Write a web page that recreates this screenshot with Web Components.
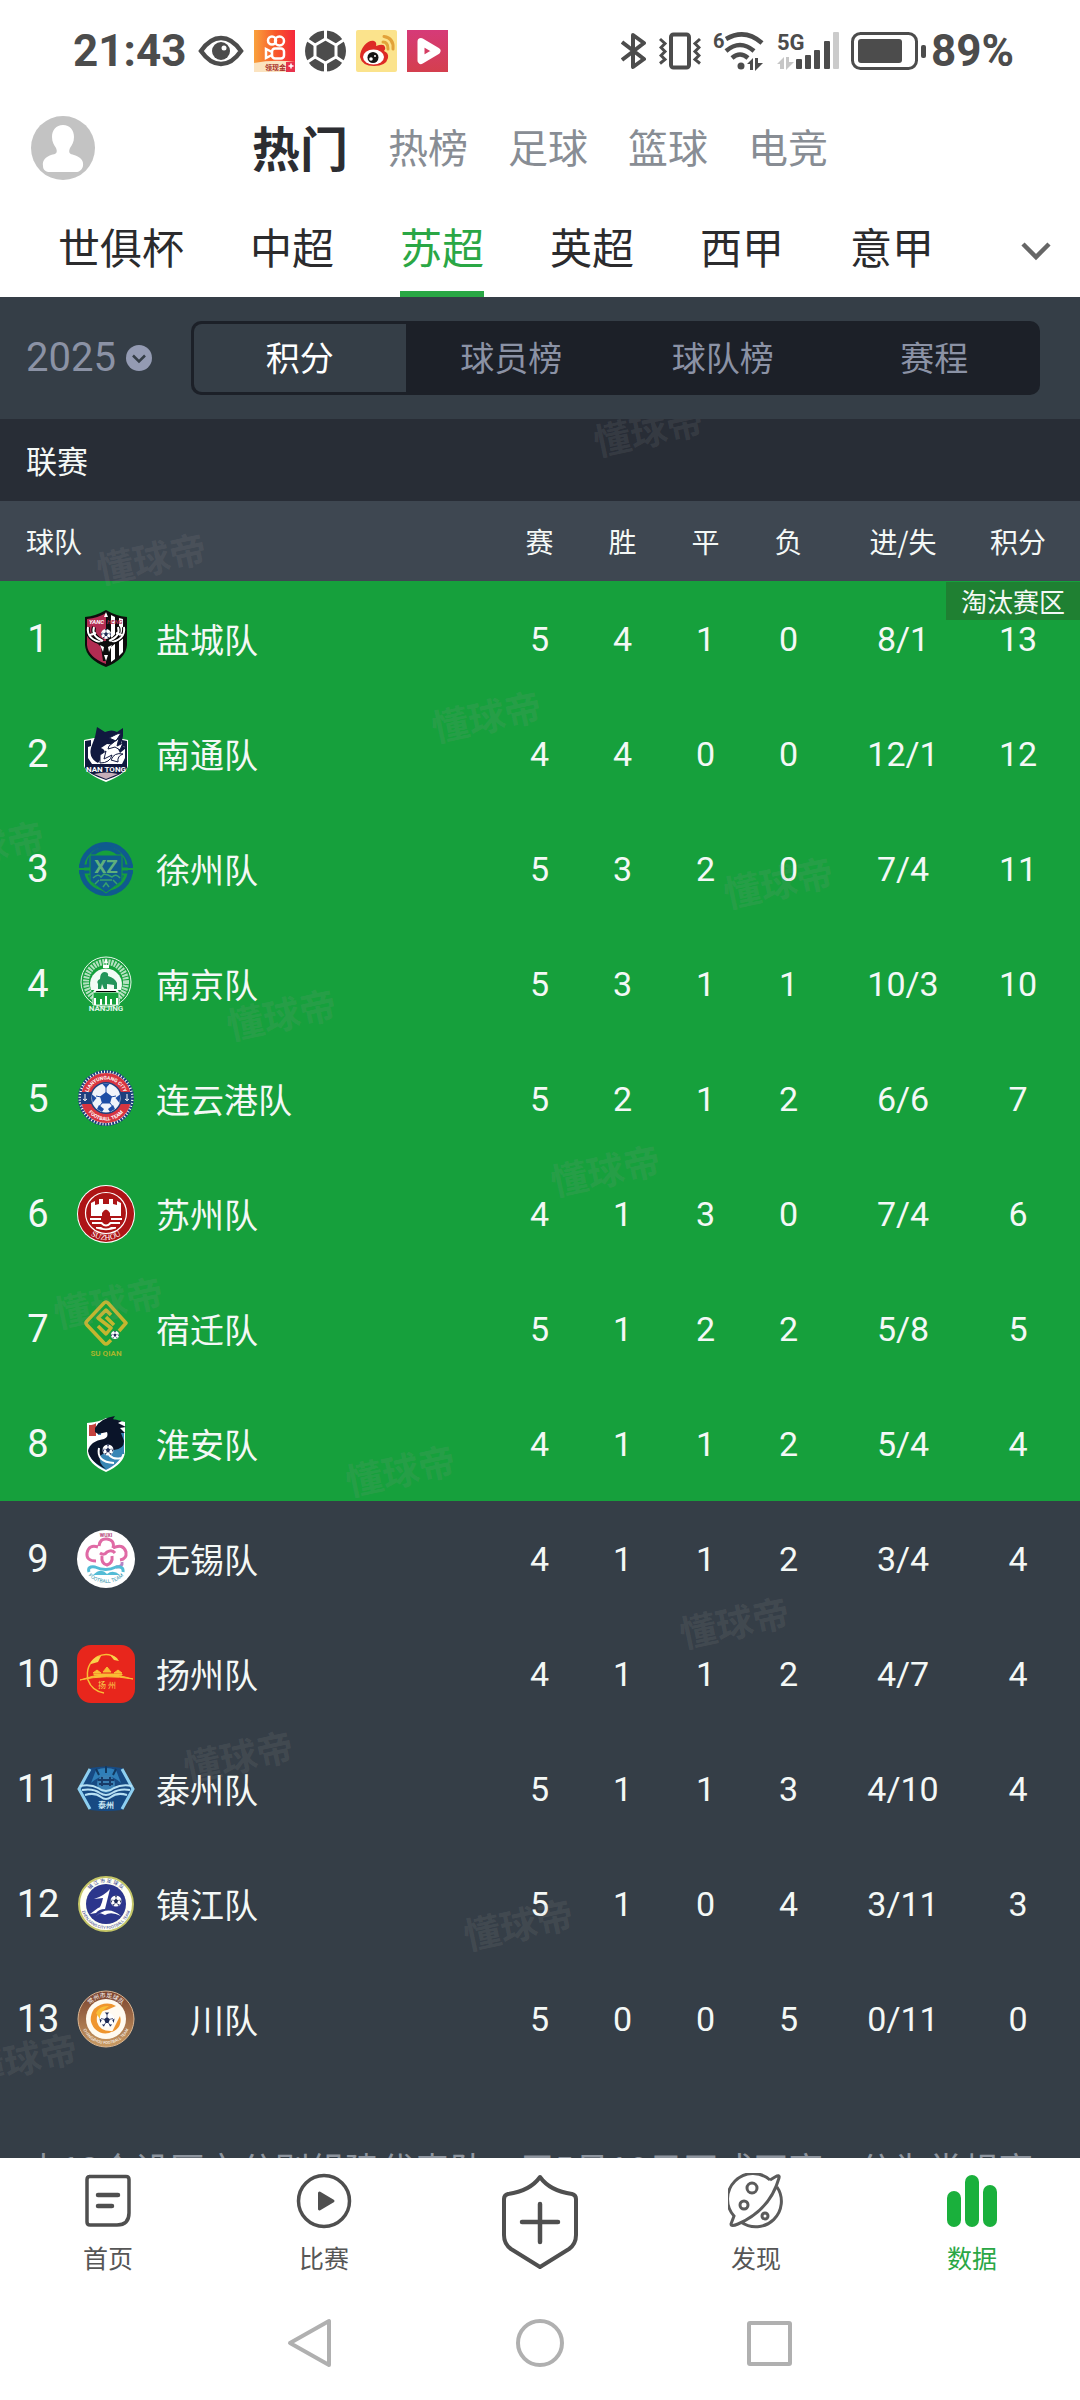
<!DOCTYPE html>
<html lang="zh-CN">
<head>
<meta charset="UTF-8">
<meta name="viewport" content="width=device-width, initial-scale=1">
<title>苏超积分榜</title>
<style>
  html, body {
    height: 100%;
    margin: 0;
  }
  body {
    font-family: "Noto Sans CJK SC", "Noto Sans", sans-serif;
    background: #fff;
    --num: Roboto, "Noto Sans CJK SC", sans-serif;
    --green: #2aa745;
    --dark: #353e47;
    --muted: #8b92a5;
  }
</style>
</head>
<body>
<app-shell>
  <status-bar slot="top"></status-bar>
  <channel-bar slot="top">
    <channel-link active>热门</channel-link>
    <channel-link>热榜</channel-link>
    <channel-link>足球</channel-link>
    <channel-link>篮球</channel-link>
    <channel-link>电竞</channel-link>
  </channel-bar>
  <league-bar slot="top">
    <league-link>世俱杯</league-link>
    <league-link>中超</league-link>
    <league-link active>苏超</league-link>
    <league-link>英超</league-link>
    <league-link>西甲</league-link>
    <league-link>意甲</league-link>
  </league-bar>

  <filter-bar>
    <filter-option active>积分</filter-option>
    <filter-option>球员榜</filter-option>
    <filter-option>球队榜</filter-option>
    <filter-option>赛程</filter-option>
  </filter-bar>
  <standings-table>联赛</standings-table>
  <league-intro>由13个设区市分别组建代表队，于5月10日正式开赛，分为常规赛</league-intro>

  <tab-bar slot="bottom">
    <tab-item icon="home">首页</tab-item>
    <tab-item icon="match">比赛</tab-item>
    <tab-item icon="post"></tab-item>
    <tab-item icon="discover">发现</tab-item>
    <tab-item icon="data" active>数据</tab-item>
  </tab-bar>
  <system-nav slot="bottom"></system-nav>
</app-shell>

<script>
class AppShell extends HTMLElement {
  connectedCallback() {
    this.attachShadow({ mode: 'open' });
    this.shadowRoot.innerHTML = `
      <style>
        :host {
          display: flex;
          flex-direction: column;
          height: 100vh;
        }
        main {
          flex: 1;
          min-height: 0;
          overflow-y: auto;
          scrollbar-width: none;
          background: var(--dark);
        }
      </style>
      <header><slot name="top"></slot></header>
      <main><slot></slot></main>
      <footer><slot name="bottom"></slot></footer>
    `;
  }
}

class StatusBar extends HTMLElement {
  connectedCallback() {
    this.attachShadow({ mode: 'open' });
    this.shadowRoot.innerHTML = `
      <style>
        :host {
          display: flex;
          justify-content: space-between;
          align-items: center;
          height: 102px;
          padding: 0 66px 0 73px;
          color: #4c4c4c;
          font: 700 44px/48px var(--num);
        }
        div {
          display: flex;
          align-items: center;
          gap: 12px;
        }
        .apps {
          gap: 10px;
        }
        .battery {
          gap: 4px;
        }
        svg {
          display: block;
          font-family: Roboto, sans-serif;
          font-weight: 700;
        }
      </style>
      <div>
        <span>21:43</span>
        <div class="apps">
          <svg width="46" height="42" viewBox="0 0 46 42"><path d="M3 21Q12 8 23 8T43 21Q34 34 23 34T3 21Z" fill="none" stroke="#4c4c4c" stroke-width="4.500"/><circle cx="23" cy="21" r="9" fill="#4c4c4c"/><circle cx="26" cy="18" r="2.500" fill="#fff"/></svg>
          <svg width="41" height="42" viewBox="0 0 41 42">
            <defs><linearGradient id="ks" x1="0" x2="1"><stop offset="0" stop-color="#f9a13c"/><stop offset=".55" stop-color="#f8562a"/><stop offset="1" stop-color="#f5283c"/></linearGradient></defs>
            <rect width="41" height="42" fill="url(#ks)"/>
            <g fill="none" stroke="#fff" stroke-width="2.500"><circle cx="18" cy="10.500" r="4"/><circle cx="25.500" cy="11" r="4.500"/><rect x="18" y="18.500" width="12" height="10" rx="3"/><path d="M18 22l-6-3v9l6-3"/></g>
            <path d="M0 33Q20 29 41 32V42H0Z" fill="#fbe3c0"/><rect x="32" y="32" width="9" height="10" fill="#e8324c"/><path d="M37 33.500v5M34.500 36h5" stroke="#fff" stroke-width="1.500"/>
            <text x="11" y="40" font-size="7" fill="#a8302a" font-family="Noto Sans CJK SC">领现金</text>
          </svg>
          <svg width="41" height="42" viewBox="0 0 41 42"><circle cx="20.500" cy="21" r="20.500" fill="#4c4c4c"/><g stroke="#fff" stroke-width="3" fill="none"><path d="M20.500 9L31 15v12L20.500 33L10 27V15Z"/><path d="M20.500 0v9M20.500 33v9M31 15l7.500-5M31 27l7.500 5M10 15L2.500 10M10 27l-7.500 5"/></g></svg>
          <svg width="41" height="42" viewBox="0 0 41 42"><rect width="41" height="42" rx="2" fill="#fbe38c"/><path d="M4 27C4 17 13 9 18 11Q21 12 20 16Q28 13 29 17Q30 19 28 21Q33 23 32 28Q30 36 18 36T4 27Z" fill="#dd2a25"/><ellipse cx="17.500" cy="27" rx="10.500" ry="7.500" fill="#fff"/><circle cx="17" cy="27.500" r="5.500" fill="#151515"/><circle cx="15" cy="29" r="1.800" fill="#fff"/><circle cx="19" cy="26" r="1" fill="#fff"/><path d="M27 12Q32 12 32 19M28 6.500Q38 8 37 19" stroke="#e2a23a" stroke-width="3" fill="none" stroke-linecap="round"/></svg>
          <svg width="41" height="42" viewBox="0 0 41 42">
            <defs><linearGradient id="vd" x1="0" x2="0" y1="0" y2="1"><stop offset="0" stop-color="#d63a78"/><stop offset="1" stop-color="#d43f4e"/></linearGradient></defs>
            <rect width="41" height="42" fill="url(#vd)"/><path d="M14 11.500L30 21L14 30.500Z" fill="none" stroke="#fff" stroke-width="7" stroke-linejoin="round"/>
          </svg>
        </div>
      </div>
      <div>
        <svg width="26" height="40" viewBox="0 0 26 40"><path d="M1 11L23 28L12 36V4L23 12L1 29" fill="none" stroke="#4c4c4c" stroke-width="4" stroke-linejoin="round"/></svg>
        <svg width="42" height="40" viewBox="0 0 42 40"><g fill="none" stroke="#4c4c4c"><rect x="12" y="3.500" width="18" height="33" rx="2.500" stroke-width="4"/><path d="M1 8l5 4.500-4 4 4 4-4 4 4 4-5 4M41 8l-5 4.500 4 4-4 4 4 4-4 4 5 4" stroke-width="3"/></g></svg>
        <svg width="52" height="42" viewBox="0 0 52 42"><text x="0" y="18" font-size="20" fill="#4c4c4c">6</text><g fill="none" stroke="#4c4c4c" stroke-width="4.500"><path d="M13 9Q32-2 49 13"/><path d="M13 21Q27 9 41 21"/><path d="M19 28Q27 21 35 28"/></g><circle cx="28" cy="36" r="3.500" fill="#4c4c4c"/><path d="M34 34l6-6v12h-3v-6ZM42 28h3v5h5l-8 8Z" fill="#4c4c4c"/></svg>
        <svg width="62" height="42" viewBox="0 0 62 42"><text x="0" y="20" font-size="22" fill="#4c4c4c">5G</text><path d="M0 34l7-7v12h-4v-5ZM9 27h3v5h5l-8 8Z" fill="#c6c6c6"/><g fill="#4c4c4c"><rect x="19" y="29" width="6" height="10" rx="1"/><rect x="28" y="25" width="6" height="14" rx="1"/><rect x="37" y="20" width="6" height="19" rx="1"/><rect x="47" y="11" width="6" height="28" rx="1"/></g><rect x="56" y="2" width="6" height="37" rx="1" fill="#cbcbcb"/></svg>
        <div class="battery">
          <svg width="76" height="40" viewBox="0 0 76 40"><rect x="1.500" y="2.500" width="64" height="35" rx="8" fill="none" stroke="#4c4c4c" stroke-width="3"/><rect x="7" y="8" width="44" height="24" rx="3" fill="#4c4c4c"/><rect x="70" y="14" width="5" height="13" rx="2" fill="#4c4c4c"/></svg>
          <span>89%</span>
        </div>
      </div>
    `;
  }
}

class ChannelBar extends HTMLElement {
  connectedCallback() {
    this.attachShadow({ mode: 'open' });
    this.shadowRoot.innerHTML = `
      <style>
        :host {
          display: grid;
          grid-template-columns: 64px 1fr 64px;
          align-items: center;
          height: 92px;
          padding: 0 31px;
        }
        nav {
          display: flex;
          justify-content: center;
          align-items: center;
          gap: 40px;
          padding-bottom: 4px;
        }
        button {
          padding: 0;
          border: 0;
          background: none;
        }
        svg {
          display: block;
        }
      </style>
      <button aria-label="我的">
        <svg width="64" height="64" viewBox="0 0 64 64"><circle cx="32" cy="32" r="32" fill="#c3c3c3"/><path d="M32 9c7 0 11 5 11 12 0 5-2 8-4 11-2 5 0 6 4 7 6 2 10 5 9 11-1 4-4 6-7 6H19c-4 0-7-2-7-6-1-6 3-9 8-11 5-1 7-2 5-7-2-3-4-6-4-11 0-7 4-12 11-12Z" fill="#fff"/></svg>
      </button>
      <nav><slot></slot></nav>
    `;
  }
}

class ChannelLink extends HTMLElement {
  connectedCallback() {
    this.attachShadow({ mode: 'open' });
    this.shadowRoot.innerHTML = `
      <style>
        :host { display: block; }
        a {
          color: #888d94;
          font-size: 40px;
          line-height: 60px;
          text-decoration: none;
          white-space: nowrap;
        }
        :host([active]) a {
          color: #2c2d31;
          font-size: 48px;
          font-weight: 700;
        }
      </style>
      <a href="#"><slot></slot></a>
    `;
  }
}

class LeagueBar extends HTMLElement {
  connectedCallback() {
    this.attachShadow({ mode: 'open' });
    this.shadowRoot.innerHTML = `
      <style>
        :host {
          display: flex;
          justify-content: space-between;
          align-items: stretch;
          height: 103px;
          padding: 0 28px 0 58px;
        }
        nav {
          display: flex;
          gap: 66px;
        }
        button {
          padding: 8px 0 0;
          border: 0;
          background: none;
        }
        svg { display: block; }
      </style>
      <nav><slot></slot></nav>
      <button aria-label="更多联赛">
        <svg width="32" height="32" viewBox="0 0 32 32"><path d="M3 10L16 23L29 10" fill="none" stroke="#666" stroke-width="4.500"/></svg>
      </button>
    `;
  }
}

class LeagueLink extends HTMLElement {
  connectedCallback() {
    this.attachShadow({ mode: 'open' });
    this.shadowRoot.innerHTML = `
      <style>
        :host { display: block; }
        a {
          display: block;
          box-sizing: border-box;
          height: 100%;
          padding-top: 22px;
          border-bottom: 6px solid transparent;
          color: #2b2b2d;
          font-size: 42px;
          line-height: 60px;
          text-decoration: none;
          white-space: nowrap;
        }
        :host([active]) a {
          color: var(--green);
          border-color: var(--green);
        }
      </style>
      <a href="#"><slot></slot></a>
    `;
  }
}

class FilterBar extends HTMLElement {
  connectedCallback() {
    this.attachShadow({ mode: 'open' });
    this.shadowRoot.innerHTML = `
      <style>
        :host {
          display: flex;
          align-items: center;
          gap: 39px;
          padding: 24px 40px 24px 26px;
        }
        label {
          display: flex;
          align-items: center;
          gap: 10px;
        }
        select {
          appearance: none;
          padding: 0;
          border: 0;
          background: none;
          color: var(--muted);
          font: 400 40px/48px var(--num);
        }
        .options {
          flex: 1;
          display: flex;
          padding: 3px 0 3px 3px;
          border-radius: 10px;
          overflow: hidden;
          background: #1c2028;
        }
        svg { display: block; }
      </style>
      <label>
        <select aria-label="赛季"><option>2025</option></select>
        <svg width="26" height="26" viewBox="0 0 26 26"><circle cx="13" cy="13" r="13" fill="#949bb3"/><path d="M7 10.500L13 16.500L19 10.500" fill="none" stroke="#353e47" stroke-width="2.500"/></svg>
      </label>
      <div class="options"><slot></slot></div>
    `;
  }
}

class FilterOption extends HTMLElement {
  connectedCallback() {
    this.attachShadow({ mode: 'open' });
    this.shadowRoot.innerHTML = `
      <style>
        :host {
          display: block;
          flex: 1;
        }
        button {
          width: 100%;
          height: 68px;
          padding: 0 0 4px;
          border: 0;
          background: none;
          color: var(--muted);
          font: inherit;
          font-size: 34px;
        }
        :host([active]) button {
          border-radius: 8px 0 0 8px;
          background: var(--dark);
          color: #fff;
        }
      </style>
      <button><slot></slot></button>
    `;
  }
}

const soccer = `<circle r="10" fill="#fff"/><path d="M0-4L4-1L2 4H-2L-4-1ZM-3-10L3-10L0-7ZM10-2L9 4L7 0ZM-10-2L-9 4L-7 0ZM4 9L7 6L3 6ZM-4 9L-7 6L-3 6Z" fill="#1d2a55"/><path d="M0-4V-8M4-1L8-2M2 4L4 7M-2 4L-4 7M-4-1L-8-2" stroke="#1d2a55"/>`;

const crests = {
  yancheng: `
    <path d="M9 8Q20 7 30 1Q40 7 51 8V36Q50 50 30 58Q10 50 9 36Z" fill="#0d0d0d"/>
    <path d="M11 10Q22 9 30 4V55Q12 48 11 36Z" fill="#b22c52"/>
    <path d="M35 6l4 2v42l-4 3ZM43 9l4 1v33l-4 4Z" fill="#fff"/>
    <path d="M30 3l2 5h-4Z" fill="#fff"/>
    <path d="M12 18Q10 31 28 34M18 18Q15 27 27 32M48 18Q50 31 32 34M42 18Q45 27 33 32M15 27l-3-2M45 27l3-2" fill="none" stroke="#000" stroke-width="4"/>
    <path d="M12 18Q10 31 28 34M18 18Q15 27 27 32M48 18Q50 31 32 34M42 18Q45 27 33 32M14 26l6-2M46 26l-6-2" fill="none" stroke="#fff" stroke-width="2"/>
    <path d="M21 34l8-2h3l8 2-5 4-2 14h-6l-2-14Z" fill="#0d0d0d"/>
    <path d="M24 36l4 2-1 5ZM36 36l-4 2 1 5ZM28 46h4l-2 6Z" fill="#fff"/>
    <g transform="translate(30 25) scale(.5)">${soccer}</g>
    <text x="13" y="15" font-size="6" font-weight="700" font-style="italic" fill="#fff">YANC</text><text x="31" y="15" font-size="6" font-weight="700" font-style="italic" fill="#b22c52">HENG</text>`,
  nantong: `
    <path d="M8 16l10-2h24l10 2v26Q50 50 30 58Q10 50 8 42Z" fill="#fff"/>
    <path d="M9 17l6-1v6l-3 1v11l4 6H9ZM51 17l-5-1v6l3 1v11l-3 6h5Z" fill="#10193f"/>
    <path d="M19 13l2-10 8 5q7-3 12 0l6-4v8l-2 9 5 3-6 5-4-8-9-1-6 4q5 2 3 5l-4 2q1 5-2 8Q11 33 16 21Z" fill="#10193f"/>
    <path d="M33 14l8-4 4-1-5 8ZM33 22l10-8-2 8 6-3-3 7-5-3-7 2ZM24 31l6-4-2 8 8-4q-2 8-12 8ZM35 36q3-8 12-6-6 2-5 8Z" fill="#fff" stroke="#10193f"/>
    <path d="M9 40h42v4Q48 50 30 56Q12 50 9 44Z" fill="#10193f"/>
    <path d="M18 50Q30 47 42 50L30 55Z" fill="#c7aeb9"/>
    <text x="30" y="48" font-size="8" font-weight="700" text-anchor="middle" fill="#fff">NAN TONG</text>`,
  xuzhou: `
    <g fill="none" stroke="#0f5b8e">
      <circle cx="30" cy="30" r="24.500" stroke-width="5"/>
      <path d="M12.500 27A17.500 17.500 0 0 1 47.500 27" stroke-width="4"/>
      <path d="M3 27H15M45 27H57M3 33H15M45 33H57" stroke-width="3"/>
      <path d="M14 36A17 17 0 0 0 22 46M46 36A17 17 0 0 1 38 46" stroke-width="4"/>
    </g>
    <path d="M2 30H14M46 30H58" stroke="#16a03c" stroke-width="2"/>
    <path d="M14 16H46V42L30 54L14 42Z" fill="#0f5b8e" stroke="#16a03c"/>
    <path d="M17 39Q22 34 25 38L28 35L32 36L36 38Q40 34 44 39M19 45L23 41M41 45L37 41M24 41H36M27 48L30 44L33 48" fill="none" stroke="#38a06e" stroke-width="1.500"/>
    <text x="30" y="34" font-size="19" font-weight="700" text-anchor="middle" fill="#5fb07c">XZ</text>`,
  nanjing: `
    <g fill="none" stroke="#e9f7ec"><circle cx="30" cy="28" r="25"/><circle cx="30" cy="28" r="20" stroke-width="6" stroke-dasharray="2 1" stroke-opacity=".75"/></g>
    <path d="M15 36A16 16 0 1 1 45 36Z" fill="#f4fbf5"/>
    <path d="M22 35V30Q20 27 24 25Q24 19 28 18Q33 18 32 22Q39 24 41 29V35H38V31L31 30V35H28L26 30L25 35Z" fill="#24945a"/>
    <path d="M28 9h4l-2-5ZM27 11h6v3h-6Z" fill="#fff"/>
    <path d="M17 38H43V51H17Z" fill="#16a03c" stroke="#dff3e4"/>
    <path d="M19 51V44M25 51V45M30 51V42M35 51V45M41 51V44M18 38L20 36H40L42 38" stroke="#fff" stroke-width="2"/>
    <text x="30" y="57" font-size="8" text-anchor="middle" font-weight="700" fill="#dff3e4">NANJING</text>`,
  lianyungang: `
    <circle cx="30" cy="29" r="27.500" fill="#fff"/><circle cx="30" cy="29" r="26.500" fill="none" stroke="#1e3f7e" stroke-width="3" stroke-dasharray="2 1"/>
    <circle cx="30" cy="29" r="20" fill="none" stroke="#d83540" stroke-width="10"/>
    <path d="M5 23H16V35H5ZM44 23H55V35H44Z" fill="#1e3f7e"/>
    <path d="M9 25v7M7 30q2 3 4 0M51 25v7M49 30q2 3 4 0" fill="none" stroke="#fff"/>
    <circle cx="30" cy="29" r="16" fill="#1e3f7e"/>
    <circle cx="30" cy="29" r="14.500" fill="#f0f3fa"/>
    <path d="M30 23l6 4.500-2 7h-8l-2-7ZM26 14.500h8l-4 4.500ZM44.500 25l-1 9-4-5ZM15.500 25l1 9 4-5ZM34 43l5-3-2-4-5 4ZM26 43l-5-3 2-4 5 4Z" fill="#1e4ea5"/>
    <path d="M30 24V18M35 28l5-1M34 34l3 4M26 34l-3 4M25 28l-5-1" stroke="#1e4ea5"/>
    <path id="lt" d="M11.500 29A18.500 18.500 0 0 1 48.500 29" fill="none"/><path id="lb" d="M7.500 29A22.500 22.500 0 0 0 52.500 29" fill="none"/>
    <text font-size="5" font-weight="700" fill="#fff" text-anchor="middle"><textPath href="#lt" startOffset="50%">LIANYUNGANG CITY</textPath></text>
    <text font-size="5" font-weight="700" fill="#fff" text-anchor="middle"><textPath href="#lb" startOffset="50%">FOOTBALL TEAM</textPath></text>`,
  suzhou: `
    <circle cx="30" cy="30" r="29" fill="#fff"/><circle cx="30" cy="30" r="28" fill="#ad1416"/>
    <circle cx="30" cy="29" r="20.500" fill="none" stroke="#fff" stroke-width="1.200"/>
    <path d="M15 32V19l4-2v4l4-1v-5h4v5h6v-5h4v5l4 1v-4l4 2v13H34V29q-4-7-8 0v3ZM14 34H25V36H14ZM35 34H46V36H35ZM16 38H26q4 5 8 0H44V40H35q-5 5-10 0H16ZM20 43H25q5 3 10 0H40V44.500Q30 48 20 44.500Z" fill="#fff"/>
    <path id="sz" d="M4 30A26 26 0 0 0 56 30" fill="none"/>
    <text font-size="8" fill="#fff" font-family="Liberation Serif" text-anchor="middle"><textPath href="#sz" startOffset="50%">SUZHOU</textPath></text>`,
  suqian: `
    <g fill="none" stroke="#c4b62f" stroke-width="3.500" stroke-linejoin="round"><path d="M43 32L50 24L32 4Q30 2 28 4L11 22Q9 24 11 26L28 44Q30 46 32 44L35 41"/><path d="M35 16L30 11L22 19L35 29L30 35L22 27M30 18L38 26"/></g>
    <g transform="translate(39 36) scale(.4)">${soccer}</g>
    <text x="30" y="57" font-size="8" font-weight="700" text-anchor="middle" fill="#a7b52d">SU QIAN</text>`,
  huaian: `
    <path d="M11 9Q24 8 30 4L49 8V38Q48 50 30 58Q12 50 11 38Z" fill="#fff"/>
    <path d="M13 11Q18 11 20 9V22H13Z" fill="#c5423e"/><path d="M22 9h3v12h-3Z" fill="#3e87bd"/>
    <path d="M13 37H47Q46 48 30 56Q14 48 13 37ZM40 18H48V40H36Z" fill="#3886b5"/>
    <path d="M19 14Q25 4 39 2L37 5L46 7L42 9L50 13L44 14L49 19L45 19L48 27Q48 35 38 36Q30 37 24 42Q22 49 30 55Q14 48 12 37Q14 27 28 25Q33 23 31 18L22 20L19 18Z" fill="#0a1429"/>
    <path d="M23 34Q20 48 38 49M33 41Q38 46 45 44" fill="none" stroke="#fff" stroke-width="2"/>
    <g transform="translate(32 36) scale(.55)">${soccer}</g>`,
  wuxi: `
    <circle cx="30" cy="30" r="29" fill="#fff"/>
    <g fill="none" stroke="#e06aa5" stroke-width="3"><path d="M23 17Q24 9 31 10Q39 11 37 19M20 32Q10 32 11 24Q13 15 22 18M37 19Q47 14 50 23Q51 30 44 31M24 24Q28 27 31 23Q36 20 39 24M26 27Q25 35 31 36Q37 34 36 27"/><path d="M40 38Q47 38 46 33" stroke="#b583c5"/></g>
    <path d="M13 43Q11 37 19 38Q30 43 40 38Q48 37 47 43" fill="none" stroke="#53bcd6" stroke-width="3"/><path d="M17 46Q25 38 31 45Q37 40 44 46Z" fill="#53bcd6"/>
    <path id="wx" d="M5 29A25 25 0 0 0 55 29" fill="none"/>
    <text x="30" y="8" font-size="5" font-weight="700" text-anchor="middle" fill="#b03e78">WUXI</text>
    <text font-size="5" fill="#3296ad" text-anchor="middle"><textPath href="#wx" startOffset="50%">FOOTBALL TEAM</textPath></text>`,
  yangzhou: `
    <rect x="1" y="1" width="58" height="58" rx="14" fill="#e8261c"/>
    <path d="M41 15Q32 7 21 13Q9 21 12 36Q16 47 28 49" fill="none" stroke="#f9bd35" stroke-width="1.500"/>
    <path d="M15 18Q19 12 25 12L22 18L15 20ZM34 11Q40 12 43 17L38 16Z" fill="#f9d34c"/>
    <path d="M4 36Q30 26 57 35Q30 30 4 36ZM17 29l4-3 4 3ZM27 28l4-5 4 5ZM38 29l4-3 4 3ZM18 30H46V31H18Z" fill="#f9bd35" stroke="#f9bd35"/>
    <text x="31" y="44" font-size="8" text-anchor="middle" fill="#f9d34c">扬 州</text>`,
  taizhou: `
    <path d="M14 9Q30 6 46 9L58 30L46 51Q30 53 14 51L2 30Z" fill="#174a83"/>
    <path d="M20 11Q30 7 40 11L45 24Q30 10 15 24Z" fill="#307fb9"/><path d="M30 7V14M20 10L23 16M40 10L37 16" stroke="#12395f" stroke-width="2"/>
    <path d="M14 10L3 30L14 50M46 10L57 30L46 50" fill="none" stroke="#8ecff0" stroke-width="3"/>
    <circle cx="30" cy="25" r="9" fill="#3a80b4"/><path d="M22 21H38M23 25H37M26 18V27M34 18V27" stroke="#183b68" stroke-width="2"/>
    <path d="M4 27Q15 25 22 29Q30 35 38 29Q46 25 56 27M6 31Q17 29 24 34Q30 38 36 34Q44 29 54 31M9 36Q19 33 25 38Q30 42 35 38Q41 33 51 36" fill="none" stroke="#b7e0f3" stroke-width="2"/>
    <text x="30" y="49" font-size="8" font-weight="700" text-anchor="middle" fill="#cdeaf7">泰州</text>`,
  zhenjiang: `
    <circle cx="30" cy="30" r="27" fill="#fffff4" stroke="#c4c566" stroke-width="2"/><circle cx="30" cy="30" r="20" fill="#2c368c"/>
    <path d="M18 25Q28 22 34 15L29 35Q23 35 20 39L14 40L22 34Q25 34 27 24ZM20 42Q32 31 45 42Q35 37 29 41L24 39Z" fill="#fff"/>
    <g transform="translate(40 27) scale(.55)">${soccer}</g>
    <path id="zt" d="M8.500 30A21.500 21.500 0 0 1 51.500 30" fill="none"/><path id="zb" d="M5 30A25 25 0 0 0 55 30" fill="none"/>
    <text font-size="5" fill="#2c368c" text-anchor="middle"><textPath href="#zt" startOffset="50%">镇 江 市 足 球 队</textPath></text>
    <text font-size="4" fill="#2c368c" text-anchor="middle"><textPath href="#zb" startOffset="50%">ZHENJIANG CITY FOOTBALL TEAM</textPath></text>`,
  changzhou: `
    <defs><linearGradient id="cz" x1="0" x2="0" y1="0" y2="1"><stop offset="0" stop-color="#79412f"/><stop offset="1" stop-color="#c99b63"/></linearGradient></defs>
    <circle cx="30" cy="30" r="28" fill="url(#cz)" stroke="#d9b591"/><circle cx="30" cy="30" r="20" fill="#fffaf0"/>
    <path d="M18 20Q29 11 40 17L31 21Q19 22 21 33Q24 43 37 42Q28 48 19 40Q11 31 18 20ZM44 27Q47 38 36 43L40 35Z" fill="#ef952e"/>
    <path d="M20 24Q24 16 33 17Q23 23 24 30Z" fill="#f9bd35"/>
    <g transform="translate(31 31) scale(.75)">${soccer}</g>
    <path id="ct" d="M8.500 30A21.500 21.500 0 0 1 51.500 30" fill="none"/><path id="cb" d="M5 30A25 25 0 0 0 55 30" fill="none"/>
    <text font-size="6" fill="#fff" text-anchor="middle"><textPath href="#ct" startOffset="50%">常州市足球队</textPath></text>
    <text font-size="4" fill="#fff" text-anchor="middle"><textPath href="#cb" startOffset="50%">CHANGZHOU FOOTBALL TEAM</textPath></text>`
};

class TeamCrest extends HTMLElement {
  connectedCallback() {
    this.attachShadow({ mode: 'open' });
    this.shadowRoot.innerHTML = `
      <style>
        :host { display: block; }
        svg {
          display: block;
          font-family: Roboto, "Noto Sans CJK SC", sans-serif;
        }
      </style>
      <svg width="60" height="60" viewBox="0 0 60 60" aria-hidden="true">${crests[this.getAttribute('team')]}</svg>
    `;
  }
}

const teams = [
  ['yancheng', '盐城队', 5, 4, 1, 0, '8/1', 13],
  ['nantong', '南通队', 4, 4, 0, 0, '12/1', 12],
  ['xuzhou', '徐州队', 5, 3, 2, 0, '7/4', 11],
  ['nanjing', '南京队', 5, 3, 1, 1, '10/3', 10],
  ['lianyungang', '连云港队', 5, 2, 1, 2, '6/6', 7],
  ['suzhou', '苏州队', 4, 1, 3, 0, '7/4', 6],
  ['suqian', '宿迁队', 5, 1, 2, 2, '5/8', 5],
  ['huaian', '淮安队', 4, 1, 1, 2, '5/4', 4],
  ['wuxi', '无锡队', 4, 1, 1, 2, '3/4', 4],
  ['yangzhou', '扬州队', 4, 1, 1, 2, '4/7', 4],
  ['taizhou', '泰州队', 5, 1, 1, 3, '4/10', 4],
  ['zhenjiang', '镇江队', 5, 1, 0, 4, '3/11', 3],
  ['changzhou', '\u3000川队', 5, 0, 0, 5, '0/11', 0]
];
const qualified = 8;

// watermark centres: percent across, pixels down from the section title
const marks = [
  [60, 10], [14, 138], [45, 296], [-1, 426], [72, 462], [26, 594], [56, 750],
  [10, 882], [37, 1050], [68, 1202], [22, 1336], [48, 1504], [2, 1638]
];

class StandingsTable extends HTMLElement {
  connectedCallback() {
    const row = ([crest, name, ...stats], i) => `
      <tr>
        <td class="rank">${i + 1}</td>
        <td><team-crest team="${crest}"></team-crest></td>
        <td class="name">${name}</td>
        ${stats.map(s => `<td>${s}</td>`).join('')}
      </tr>`;
    const rows = teams.map(row);

    this.attachShadow({ mode: 'open' });
    this.shadowRoot.innerHTML = `
      <style>
        :host {
          display: block;
          position: relative;
          overflow: hidden;
          color: #f4f8f6;
        }
        h2 {
          margin: 0;
          padding: 18px 26px;
          background: #282d36;
          font-size: 31px;
          line-height: 46px;
          font-weight: 400;
        }
        table {
          width: 100%;
          table-layout: fixed;
          border-collapse: collapse;
        }
        thead {
          background: #3e4751;
        }
        th {
          height: 80px;
          padding: 0;
          font-size: 28px;
          font-weight: 400;
        }
        th:first-child {
          padding-left: 26px;
          text-align: left;
        }
        td {
          height: 115px;
          padding: 0;
          text-align: center;
          font: 400 34px/40px var(--num);
        }
        th:last-child, td:last-child {
          padding-right: 20px;
        }
        td.rank {
          font-size: 38px;
        }
        td.name {
          padding-left: 20px;
          text-align: left;
          font-family: inherit;
          white-space: nowrap;
        }
        .qualified {
          background: #16a03c;
        }
        .zone {
          position: absolute;
          right: 0;
          top: 163px;
          padding: 0 15px;
          background: #1f8032;
          font-size: 26px;
          line-height: 38px;
        }
        .marks span {
          position: absolute;
          color: rgba(150, 150, 150, .15);
          font-size: 37px;
          line-height: 40px;
          font-weight: 700;
          transform: translate(-50%, -50%) rotate(-12deg);
          pointer-events: none;
          white-space: nowrap;
        }
        .c1 { width: 76px; }
        .c2 { width: 60px; }
        .c3 { width: 83px; }
        .c4 { width: 146px; }
        .c5 { width: 104px; }
      </style>
      <h2><slot></slot></h2>
      <table>
        <colgroup>
          <col class="c1"><col class="c2"><col>
          <col class="c3"><col class="c3"><col class="c3"><col class="c3">
          <col class="c4"><col class="c5">
        </colgroup>
        <thead>
          <tr>
            <th colspan="3">球队</th>
            <th>赛</th><th>胜</th><th>平</th><th>负</th><th>进/失</th><th>积分</th>
          </tr>
        </thead>
        <tbody class="qualified">${rows.slice(0, qualified).join('')}</tbody>
        <tbody>${rows.slice(qualified).join('')}</tbody>
      </table>
      <div class="zone">淘汰赛区</div>
      <div class="marks" aria-hidden="true">
        ${marks.map(([x, y]) => `<span style="left:${x}%;top:${y}px">懂球帝</span>`).join('')}
      </div>
    `;
  }
}

class LeagueIntro extends HTMLElement {
  connectedCallback() {
    this.attachShadow({ mode: 'open' });
    this.shadowRoot.innerHTML = `
      <style>
        :host {
          display: block;
          padding: 68px 20px 26px 26px;
          color: #8e959f;
        }
        p {
          margin: 0;
          font-size: 35px;
          line-height: 48px;
        }
      </style>
      <p><slot></slot></p>
    `;
  }
}

class TabBar extends HTMLElement {
  connectedCallback() {
    this.attachShadow({ mode: 'open' });
    this.shadowRoot.innerHTML = `
      <style>
        :host { display: block; }
        nav {
          display: grid;
          grid-template-columns: repeat(5, 1fr);
          height: 128px;
          background: #fff;
        }
      </style>
      <nav><slot></slot></nav>
    `;
  }
}

const tabIcons = {
  home: `<svg width="56" height="56" viewBox="0 0 56 56" fill="none" stroke="#4f4f4f" stroke-width="3.500" stroke-linecap="round"><path d="M9 3.500H46Q49 3.500 49 6.500V40Q49 52 37 52H10Q7 52 7 49V6.500Q7 3.500 10 3.500Z"/><path d="M18 22H38M18 33H32" stroke-width="4.500"/></svg>`,
  match: `<svg width="56" height="56" viewBox="0 0 56 56"><circle cx="28" cy="28" r="25.500" fill="none" stroke="#4f4f4f" stroke-width="3.500"/><path d="M23.500 20L37 28L23.500 36Z" fill="#4f4f4f" stroke="#4f4f4f" stroke-width="3" stroke-linejoin="round"/></svg>`,
  post: `<svg width="80" height="96" viewBox="0 0 80 96" fill="none" stroke="#4f4f4f" stroke-width="4" stroke-linecap="round" stroke-linejoin="round"><path d="M40 4Q50 18 72 21Q76 22 76 26V62Q76 71 69 76L40 94L11 76Q4 71 4 62V26Q4 22 8 21Q30 18 40 4Z"/><path d="M40 31V69M22 49H58" stroke-width="4.500"/></svg>`,
  discover: `<svg width="56" height="56" viewBox="0 0 56 56" fill="none" stroke="#5b5b5b" stroke-width="3"><path d="M42 7A25.500 25.500 0 0 0 6 43L3 51Q3 54 10 51Q42 37 51 5Q52 1 47 4L42 7M49 14A25.500 25.500 0 0 1 13 49"/><circle cx="24" cy="15" r="5"/><circle cx="16" cy="32" r="4"/><circle cx="37" cy="43" r="3"/></svg>`,
  data: `<svg width="56" height="56" viewBox="0 0 56 56" fill="#1ab03c"><rect x="3" y="18" width="14" height="36" rx="7"/><rect x="21" y="2" width="14" height="52" rx="7"/><rect x="39" y="12" width="14" height="42" rx="7"/></svg>`
};

class TabItem extends HTMLElement {
  connectedCallback() {
    this.attachShadow({ mode: 'open' });
    const icon = this.getAttribute('icon');
    this.shadowRoot.innerHTML = `
      <style>
        :host { display: block; }
        a {
          display: flex;
          flex-direction: column;
          align-items: center;
          gap: 10px;
          padding-top: 15px;
          color: #565656;
          font-size: 25px;
          line-height: 36px;
          text-decoration: none;
        }
        :host([active]) a { color: var(--green); }
        svg { display: block; }
      </style>
      <a href="#"${icon === 'post' ? ' aria-label="发布"' : ''}>${tabIcons[icon]}<span><slot></slot></span></a>
    `;
  }
}

class SystemNav extends HTMLElement {
  connectedCallback() {
    this.attachShadow({ mode: 'open' });
    this.shadowRoot.innerHTML = `
      <style>
        :host {
          display: flex;
          justify-content: center;
          align-items: center;
          gap: 180px;
          height: 114px;
          background: #fff;
        }
        button {
          padding: 0;
          border: 0;
          background: none;
        }
        svg {
          display: block;
          fill: none;
          stroke: #b0b0b0;
          stroke-width: 4;
          stroke-linejoin: round;
        }
      </style>
      <button aria-label="返回"><svg width="50" height="50" viewBox="0 0 50 50"><path d="M44 3V47L5 25Z"/></svg></button>
      <button aria-label="主屏幕"><svg width="50" height="50" viewBox="0 0 50 50"><circle cx="25" cy="25" r="22"/></svg></button>
      <button aria-label="最近任务"><svg width="50" height="50" viewBox="0 0 50 50"><rect x="4" y="5" width="41" height="41" rx="1"/></svg></button>
    `;
  }
}

customElements.define('app-shell', AppShell);
customElements.define('status-bar', StatusBar);
customElements.define('channel-bar', ChannelBar);
customElements.define('channel-link', ChannelLink);
customElements.define('league-bar', LeagueBar);
customElements.define('league-link', LeagueLink);
customElements.define('filter-bar', FilterBar);
customElements.define('filter-option', FilterOption);
customElements.define('team-crest', TeamCrest);
customElements.define('standings-table', StandingsTable);
customElements.define('league-intro', LeagueIntro);
customElements.define('tab-bar', TabBar);
customElements.define('tab-item', TabItem);
customElements.define('system-nav', SystemNav);
</script>
</body>
</html>
